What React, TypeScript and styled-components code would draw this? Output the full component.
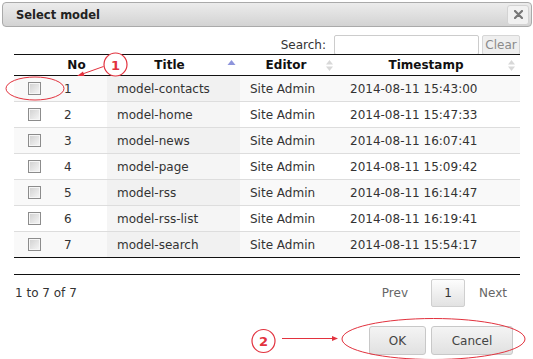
import React from "react";
import styled, { createGlobalStyle } from "styled-components";

const GlobalStyle = createGlobalStyle`
  * { box-sizing: border-box; }
  body {
    margin: 0;
    background: #fff;
    font-family: "DejaVu Sans", Verdana, sans-serif;
    font-size: 12px;
    color: #333;
  }
`;

interface Model {
  no: number;
  title: string;
  editor: string;
  stamp: string;
}

const models: Model[] = [
  { no: 1, title: "model-contacts", editor: "Site Admin", stamp: "2014-08-11 15:43:00" },
  { no: 2, title: "model-home", editor: "Site Admin", stamp: "2014-08-11 15:47:33" },
  { no: 3, title: "model-news", editor: "Site Admin", stamp: "2014-08-11 16:07:41" },
  { no: 4, title: "model-page", editor: "Site Admin", stamp: "2014-08-11 15:09:42" },
  { no: 5, title: "model-rss", editor: "Site Admin", stamp: "2014-08-11 16:14:47" },
  { no: 6, title: "model-rss-list", editor: "Site Admin", stamp: "2014-08-11 16:19:41" },
  { no: 7, title: "model-search", editor: "Site Admin", stamp: "2014-08-11 15:54:17" },
];

const Dialog = styled.div`
  position: relative;
  width: 533px;
  height: 359px;
  overflow: hidden;
  background: #fff;
`;

const TitleBar = styled.div`
  margin: 2px 1px 0 2px;
  height: 25px;
  display: flex;
  align-items: center;
  justify-content: space-between;
  padding: 0 2px 0 13px;
  border: 1px solid #aaa;
  border-radius: 4px;
  background: linear-gradient(#ececec, #d3d3d3);
`;

const Title = styled.span`
  font-weight: bold;
  font-size: 11.5px;
  color: #222;
`;

const CloseBtn = styled.button`
  width: 22px;
  height: 20px;
  padding: 0;
  display: flex;
  align-items: center;
  justify-content: center;
  border: 1px solid #d3d3d3;
  border-radius: 3px;
  background: #f1f1f1;
`;

const Content = styled.div`
  padding: 0 13px 0 14px;
`;

const SearchRow = styled.div`
  margin-top: 8px;
  height: 19px;
  display: flex;
  justify-content: flex-end;
  align-items: center;
`;

const SearchLabel = styled.label`
  margin-right: 8px;
  color: #333;
`;

const SearchInput = styled.input`
  width: 145px;
  height: 20px;
  border: 1px solid #ccc;
  border-radius: 2px;
  background: #fff;
`;

const ClearBtn = styled.button`
  margin-left: 3px;
  width: 38px;
  height: 20px;
  padding: 0;
  border: 1px solid #d6d6d6;
  border-radius: 2px;
  background: #efefef;
  color: #8a8a8a;
  font-family: "DejaVu Sans", sans-serif;
  font-size: 12px;
`;

const ScrollBody = styled.div`
  height: 221px;
  border-bottom: 1px solid #111;
`;

const Table = styled.table`
  width: 506px;
  border-collapse: separate;
  border-spacing: 0;
  table-layout: fixed;
`;

const Th = styled.th<{ $w: number }>`
  position: relative;
  width: ${(p) => p.$w}px;
  height: 22px;
  padding: 0 18px 0 10px;
  border-top: 1px solid #111;
  border-bottom: 1px solid #111;
  font-weight: bold;
  font-size: 12px;
  color: #111;
  text-align: center;
`;

const SortIcon = styled.svg<{ $right: number }>`
  position: absolute;
  right: ${(p) => p.$right}px;
  top: 4px;
`;

const Td = styled.td<{ $odd: boolean; $sorted?: boolean; $last: boolean }>`
  height: 26px;
  padding: 0 10px;
  white-space: nowrap;
  color: #333;
  border-bottom: 1px solid ${(p) => (p.$last ? "#111" : "#ddd")};
  background: ${(p) =>
    p.$sorted ? (p.$odd ? "#f1f1f1" : "#f5f5f5") : p.$odd ? "#f9f9f9" : "#fff"};
`;

const CheckCell = styled(Td)`
  padding: 0 0 0 14px;
`;

const Check = styled.input`
  appearance: none;
  display: block;
  width: 13px;
  height: 13px;
  margin: 0;
  border: 1px solid #8c8c8c;
  box-shadow: inset 0 0 0 1px #f6f6f6;
  background: linear-gradient(135deg, #cfcfcf, #f7f7f7);
`;

const Footer = styled.div`
  margin-top: 4px;
  height: 28px;
  display: flex;
  align-items: center;
  justify-content: space-between;
`;

const Info = styled.span`
  padding-left: 1px;
  color: #333;
`;

const Pager = styled.div`
  display: flex;
  align-items: center;
  height: 28px;
`;

const PageLink = styled.span<{ $pad: string }>`
  padding: ${(p) => p.$pad};
  color: #666;
`;

const PageCurrent = styled.span`
  margin-left: 12px;
  width: 34px;
  height: 28px;
  display: flex;
  align-items: center;
  justify-content: center;
  border: 1px solid #cfcfcf;
  border-radius: 2px;
  background: linear-gradient(#fdfdfd, #e2e2e2);
  color: #333;
`;

const ButtonRow = styled.div`
  margin-top: 19px;
  padding-right: 7px;
  display: flex;
  justify-content: flex-end;
  gap: 5px;
`;

const DialogBtn = styled.button<{ $w: number }>`
  width: ${(p) => p.$w}px;
  height: 29px;
  padding: 0;
  border: 1px solid #c8c8c8;
  border-radius: 3px;
  background: linear-gradient(#f4f4f4, #e1e1e1);
  color: #444;
  font-family: "DejaVu Sans", sans-serif;
  font-size: 12px;
`;

const Overlay = styled.svg`
  position: absolute;
  left: 0;
  top: 0;
  pointer-events: none;
`;

const Asc = ({ right }: { right: number }) => (
  <SortIcon $right={right} width="9" height="14" viewBox="0 0 9 14">
    <polygon points="0.5,6 4.5,1 8.5,6" fill="#8e95dc" />
  </SortIcon>
);

const Both = ({ right }: { right: number }) => (
  <SortIcon $right={right} width="7" height="14" viewBox="0 0 7 14">
    <polygon points="0,5.5 3.5,1 7,5.5" fill="#d8d8d8" />
    <polygon points="0,7.5 3.5,12 7,7.5" fill="#d8d8d8" />
  </SortIcon>
);

const RED = "#e2323e";

export default function App() {
  return (
    <Dialog>
      <GlobalStyle />
      <TitleBar>
        <Title>Select model</Title>
        <CloseBtn aria-label="close">
          <svg width="9" height="9" viewBox="0 0 9 9">
            <path d="M1 1L8 8M8 1L1 8" stroke="#777" strokeWidth="2.2" strokeLinecap="round" />
          </svg>
        </CloseBtn>
      </TitleBar>
      <Content>
        <SearchRow>
          <SearchLabel>Search:</SearchLabel>
          <SearchInput />
          <ClearBtn>Clear</ClearBtn>
        </SearchRow>
        <ScrollBody>
          <Table>
            <thead>
              <tr>
                <Th $w={40} />
                <Th $w={53}>No</Th>
                <Th $w={133}>
                  Title
                  <Asc right={4} />
                </Th>
                <Th $w={100}>
                  Editor
                  <Both right={7} />
                </Th>
                <Th $w={180}>
                  Timestamp
                  <Both right={5} />
                </Th>
              </tr>
            </thead>
            <tbody>
              {models.map((m, i) => {
                const odd = i % 2 === 0;
                const last = i === models.length - 1;
                return (
                  <tr key={m.no}>
                    <CheckCell $odd={odd} $last={last}>
                      <Check type="checkbox" />
                    </CheckCell>
                    <Td $odd={odd} $last={last}>{m.no}</Td>
                    <Td $odd={odd} $last={last} $sorted>
                      {m.title}
                    </Td>
                    <Td $odd={odd} $last={last}>{m.editor}</Td>
                    <Td $odd={odd} $last={last}>{m.stamp}</Td>
                  </tr>
                );
              })}
            </tbody>
          </Table>
        </ScrollBody>
        <Footer>
          <Info>1 to 7 of 7</Info>
          <Pager>
            <PageLink $pad="0 11px">Prev</PageLink>
            <PageCurrent>1</PageCurrent>
            <PageLink $pad="0 13px 0 14px">Next</PageLink>
          </Pager>
        </Footer>
        <ButtonRow>
          <DialogBtn $w={57}>OK</DialogBtn>
          <DialogBtn $w={82}>Cancel</DialogBtn>
        </ButtonRow>
      </Content>

      <Overlay width="533" height="359" viewBox="0 0 533 359">
        <ellipse cx="35" cy="88.5" rx="29" ry="11.5" fill="none" stroke={RED} strokeWidth="1" />
        <circle cx="115.5" cy="64.5" r="11.5" fill="#fff" stroke={RED} strokeWidth="1.2" />
        <text x="115.5" y="69.5" textAnchor="middle" fill={RED} fontWeight="bold" fontSize="13" fontFamily="DejaVu Sans, sans-serif">1</text>
        <line x1="103.5" y1="66.5" x2="81" y2="74.5" stroke={RED} strokeWidth="1" />
        <polygon points="77,76 83,71.5 84.5,76" fill={RED} />

        <circle cx="263.5" cy="341" r="11.5" fill="#fff" stroke={RED} strokeWidth="1.2" />
        <text x="263.5" y="346" textAnchor="middle" fill={RED} fontWeight="bold" fontSize="13" fontFamily="DejaVu Sans, sans-serif">2</text>
        <line x1="282" y1="338.5" x2="333" y2="338.5" stroke={RED} strokeWidth="1" />
        <polygon points="338,338.5 332,336 332,341" fill={RED} />
        <ellipse cx="433.5" cy="339" rx="91.5" ry="20.5" fill="none" stroke={RED} strokeWidth="1" />
      </Overlay>
    </Dialog>
  );
}
